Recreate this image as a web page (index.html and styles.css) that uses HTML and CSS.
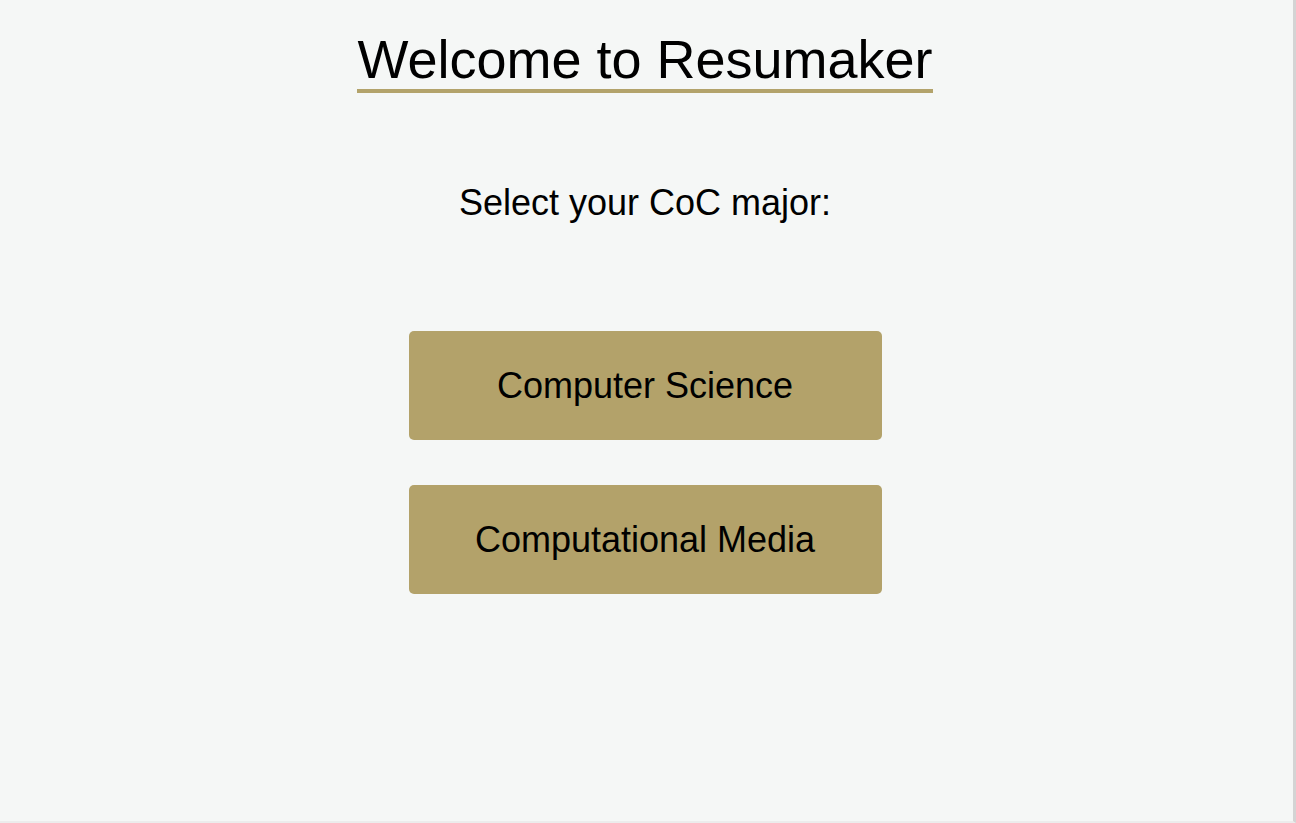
FILE: index.html
```html
<!DOCTYPE html>
<html lang="en">
<head>
<meta charset="utf-8">
<title>Resumaker</title>
<link rel="stylesheet" href="styles.css">
</head>
<body>
<div class="page">
  <main class="welcome">
    <h1 class="title">Welcome to Resumaker</h1>
    <p class="prompt">Select your CoC major:</p>
    <div class="choices">
      <button class="major" type="button">Computer Science</button>
      <button class="major" type="button">Computational Media</button>
    </div>
  </main>
</div>
</body>
</html>
```

FILE: styles.css
```css
html, body {
  margin: 0;
  padding: 0;
  height: 100%;
}

body {
  background: #f5f7f6;
  font-family: "Liberation Sans", Arial, sans-serif;
  color: #000;
  overflow: hidden;
}

.page {
  box-sizing: border-box;
  width: 1296px;
  height: 823px;
  border-right: 3px solid #d4d4d4;
  border-bottom: 2px solid #ececec;
  background: #f5f7f6;
}

.welcome {
  display: flex;
  flex-direction: column;
  align-items: center;
  padding-right: 3px;
}

.title {
  margin: 30px 0 0;
  font-size: 54px;
  font-weight: 400;
  line-height: 59px;
  border-bottom: 4px solid #b3a36b;
}

.prompt {
  margin: 89px 0 0;
  font-size: 36px;
  line-height: 41px;
}

.choices {
  margin-top: 108px;
  display: flex;
  flex-direction: column;
  gap: 45px;
}

.major {
  width: 473px;
  height: 109px;
  border: none;
  border-radius: 5px;
  background: #b3a26a;
  color: #000;
  font-family: "Liberation Sans", Arial, sans-serif;
  font-size: 36px;
  padding: 0;
  cursor: pointer;
}
```
